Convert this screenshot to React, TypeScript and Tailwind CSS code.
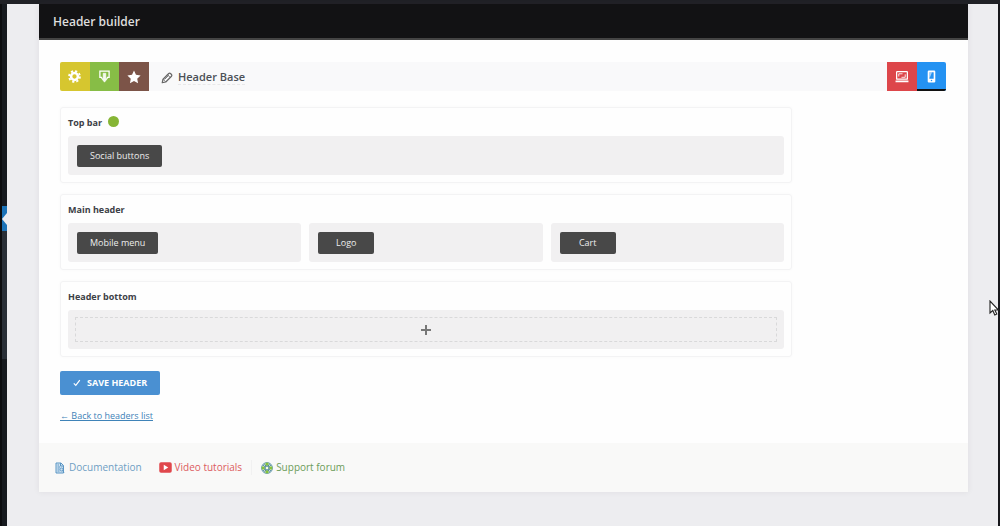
import type { ReactNode } from "react";

function GearIcon() {
  return (
    <svg viewBox="0 0 24 24" className="size-[13px]" aria-hidden="true">
      <g fill="none" stroke="#fff">
        <circle cx="12" cy="12" r="6.3" strokeWidth="4.6" />
        <circle cx="12" cy="12" r="10" strokeWidth="3.4" strokeDasharray="4 3.85" />
      </g>
    </svg>
  );
}

function ImportIcon() {
  return (
    <svg viewBox="0 0 24 24" className="size-[13px]" fill="none" stroke="#fff" strokeWidth="2.4" aria-hidden="true">
      <path d="M7.500 13.500H3.500V2h17v11.500h-4" />
      <path d="M9.500 6h5v9h3.500l-6 7.500L6 15h3.500z" fill="#fff" fillOpacity="0.9" strokeWidth="1" />
    </svg>
  );
}

function StarIcon() {
  return (
    <svg viewBox="0 0 24 24" className="size-[14px]" fill="#fff" aria-hidden="true">
      <path d="M12 1l3.4 7.3 7.9 1-5.8 5.5 1.5 7.9-7-3.9-7 3.9 1.500-7.900L.7 9.300l7.900-1z" />
    </svg>
  );
}

function PencilIcon() {
  return (
    <svg viewBox="0 0 24 24" className="size-[12px]" fill="none" stroke="#666" strokeWidth="2.400" strokeLinejoin="round" aria-hidden="true">
      <path d="M2.500 21.500l1.500-7L15.500 3q2-1.500 4 .5l1 1q2 2 .5 4L9.500 20z" />
      <path d="M4 14.500L9.500 20M13 5.500l5.500 5.500M7 15l8-8" strokeWidth="1.700" />
    </svg>
  );
}

function LaptopIcon() {
  return (
    <svg viewBox="0 0 26 24" className="h-[13px] w-[14px]" fill="none" stroke="#fff" strokeWidth="2.400" aria-hidden="true">
      <rect x="3" y="3" width="20" height="14" rx="1" />
      <path d="M7 12V7h7M19 8v5.500h-7" strokeWidth="1.600" />
      <path d="M1 21h24" strokeWidth="3" />
    </svg>
  );
}

function PhoneIcon() {
  return (
    <svg viewBox="0 0 16 24" className="h-[13px] w-[9px]" aria-hidden="true">
      <rect x="1" y="1" width="14" height="22" rx="2" fill="#fff" />
      <path d="M4 4h8v12H4z" fill="#2492f2" />
      <path d="M4 4h5L5 14H4z" fill="#fff" fillOpacity="0.600" />
      <circle cx="8" cy="19.500" r="1.400" fill="#2492f2" />
    </svg>
  );
}

function DocumentIcon() {
  return (
    <svg viewBox="0 0 20 24" className="h-[12px] w-[10px]" fill="none" stroke="#5b96c4" strokeWidth="2" aria-hidden="true">
      <path d="M2 2h10l5 5v15H2z" fill="#cfe2f1" />
      <path d="M11 2v6h6M5 6h3M5 10h5M5 14h4M5 18h4" />
      <circle cx="13" cy="15" r="3" strokeWidth="1.800" />
      <path d="M15 17l3 4" />
    </svg>
  );
}

function VideoIcon() {
  return (
    <svg viewBox="0 0 26 22" className="h-[11px] w-[13px]" aria-hidden="true">
      <rect x="0.500" y="0.500" width="25" height="21" rx="3.500" fill="#e0474c" />
      <path d="M9.500 5.500v11l9-5.500z" fill="#fff" />
    </svg>
  );
}

function SupportIcon() {
  return (
    <svg viewBox="0 0 24 24" className="size-[12px]" aria-hidden="true">
      <circle cx="12" cy="12" r="10.800" fill="#f4f8e6" stroke="#3b7f9c" strokeWidth="1.600" />
      <path
        d="M12 1.500v6M12 16.500v6M1.500 12h6M16.500 12h6"
        stroke="#86c33c"
        strokeWidth="6"
      />
      <circle cx="12" cy="12" r="4" fill="#f7fae8" stroke="#2d6f8f" strokeWidth="1.600" />
      <path d="M3.800 6l5 4M6.500 3.500l3.500 5M20.200 6l-5 4M17.500 3.500L14 8.500M3.800 18l5-4M6.500 20.500l3.500-5M20.200 18l-5-4M17.500 20.500l-3.500-5" stroke="#2d6f8f" strokeWidth="1.500" />
    </svg>
  );
}

function Cursor() {
  return (
    <svg viewBox="0 0 10 16" className="absolute top-[296px] right-[1px] h-[16px] w-[10px]" aria-hidden="true">
      <path d="M1 1v12l2.800-2.500L5.800 15l2-1-2-4h3.700z" fill="#fff" stroke="#222" strokeWidth="1.100" />
    </svg>
  );
}

function Section({ title, active, children }: { title: string; active?: boolean; children: ReactNode }) {
  return (
    <section className="rounded-[3px] border border-[#f3f3f4] px-[7px] pt-[7px] pb-[7px] shadow-[0_0_3px_rgba(0,0,0,0.03)]">
      <div className="flex h-4 items-center gap-[6px]">
        <h2 className="text-[9px] leading-4 font-bold text-[#3c4046]">{title}</h2>
        {active && <span className="mb-[3px] size-[11px] rounded-full bg-[#86b535]" />}
      </div>
      <div className="mt-[5px] flex gap-2">{children}</div>
    </section>
  );
}

function Zone({ children }: { children: ReactNode }) {
  return <div className="flex h-[39px] flex-1 items-center rounded-[3px] bg-[#f1f0f1] px-[9px]">{children}</div>;
}

function Chip({ children }: { children: ReactNode }) {
  return (
    <button type="button" className="h-[22px] min-w-[56px] rounded-[2px] bg-[#484848] px-[13px] text-[9px] text-[#ededed]">
      {children}
    </button>
  );
}

const toolButton = "flex h-full flex-1 items-center justify-center";

export default function App() {
  return (
    <div className="flex min-h-screen flex-col bg-[#202126] font-['Open_Sans','Noto_Sans',sans-serif]">
      <div className="h-1" />
      <div className="relative flex flex-1">
        <aside className="flex w-[7px] flex-col border-l-2 border-[#0c0d0f] bg-[#171a1f]">
          <div className="h-[202px]" />
          <div className="flex h-[25px] items-center justify-end bg-[#1c73b8]">
            <svg viewBox="0 0 5 12" className="h-[12px] w-[5px]" fill="#ededf0" aria-hidden="true">
              <path d="M5 0v12L0 6z" />
            </svg>
          </div>
          <div className="h-[128px] bg-[#292f37]" />
        </aside>

        <div className="flex-1 border-r-2 border-[#17171b] bg-[#ededf0] pr-[30px] pb-[34px] pl-[32px]">
          <main className="bg-[#fefefe] shadow-[0_0_6px_rgba(60,50,70,0.08)]">
            <header className="flex h-[36px] items-center border-b-2 border-[#444] bg-[#121214] px-[14px] pt-[2px]">
              <h1 className="text-[12px] font-semibold text-[#dedede]">Header builder</h1>
            </header>

            <div className="pt-[22px] pr-[22px] pb-[19px] pl-[21px]">
              <div className="flex h-[29px] items-center overflow-hidden rounded-[2px] bg-[#f9f9fa]">
                <div className="flex h-full w-[89px]">
                  <button type="button" aria-label="Settings" className={`${toolButton} bg-[#d6c62f]`}><GearIcon /></button>
                  <button type="button" aria-label="Import" className={`${toolButton} bg-[#87bd46]`}><ImportIcon /></button>
                  <button type="button" aria-label="Favorite" className={`${toolButton} bg-[#7c5448]`}><StarIcon /></button>
                </div>
                <button type="button" className="ml-[12px] flex items-center gap-[5px] pt-[2px] text-[11px] font-semibold text-[#4b5056]">
                  <PencilIcon />
                  <span className="border-b border-dashed border-[#e8e8e9] leading-[14px]">Header Base</span>
                </button>
                <div className="ml-auto flex h-full w-[59px]">
                  <button type="button" aria-label="Desktop" className={`${toolButton} bg-[#dd464a]`}><LaptopIcon /></button>
                  <button type="button" aria-label="Mobile" className={`${toolButton} bg-[#2492f2] shadow-[inset_0_-2px_0_#111]`}><PhoneIcon /></button>
                </div>
              </div>

              <div className="mt-4 flex max-w-[732px] flex-col gap-[11px]">
                <Section title="Top bar" active>
                  <Zone><Chip>Social buttons</Chip></Zone>
                </Section>
                <Section title="Main header">
                  <Zone><Chip>Mobile menu</Chip></Zone>
                  <Zone><Chip>Logo</Chip></Zone>
                  <Zone><Chip>Cart</Chip></Zone>
                </Section>
                <Section title="Header bottom">
                  <div className="flex h-[39px] flex-1 rounded-[3px] bg-[#f1f0f1] p-[7px]">
                    <button type="button" aria-label="Add element" className="flex flex-1 items-center justify-center border border-dashed border-[#d9d9da]">
                      <svg viewBox="0 0 10 10" className="size-[10px]" stroke="#777" strokeWidth="2" aria-hidden="true">
                        <path d="M5 0v10M0 5h10" />
                      </svg>
                    </button>
                  </div>
                </Section>
              </div>

              <button type="button" className="mt-[14px] flex h-[24px] items-center gap-[6px] rounded-[2px] bg-[#4a90d2] px-[13px] text-[9px] font-bold text-white">
                <svg viewBox="0 0 10 10" className="size-[8px]" fill="none" stroke="#fff" strokeWidth="1.500" aria-hidden="true">
                  <path d="M1 5.500l2.500 2.500L8.500 1.500" />
                </svg>
                SAVE HEADER
              </button>
              <a href="#headers" className="mt-[13px] block w-fit text-[9px] leading-4 text-[#3f83b8] underline">← Back to headers list</a>
            </div>

            <footer className="flex h-[49px] items-center bg-[#f9f9f8] px-[16px] text-[10px]">
              <a href="#documentation" className="flex items-center gap-1 text-[#6f9fc4]"><DocumentIcon />Documentation</a>
              <a href="#videos" className="ml-[17px] flex items-center gap-[3px] text-[#dc5b5f]"><VideoIcon />Video tutorials</a>
              <a href="#support" className="ml-[9px] flex items-center gap-[3px] border-l border-[#f1f1f1] pl-[9px] text-[#6c9c5a]"><SupportIcon />Support forum</a>
            </footer>
          </main>
        </div>
        <Cursor />
      </div>
    </div>
  );
}
